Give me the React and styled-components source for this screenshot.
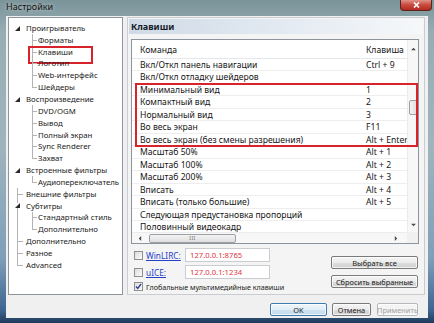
import React from 'react';
import styled, { createGlobalStyle, css } from 'styled-components';

const Global = createGlobalStyle`
  html, body { margin: 0; padding: 0; }
  body { width: 434px; height: 323px; overflow: hidden; font-family: "Noto Sans", "Open Sans", sans-serif; }
  * { box-sizing: border-box; }
`;

const Window = styled.div`
  width: 434px;
  height: 323px;
  display: flex;
  flex-direction: column;
  padding: 0 6px 5px 6px;
  background: linear-gradient(180deg, #7a9499 0%, #97adb3 10%, #9fb4bd 45%, #7f9fb9 80%, #3e6591 96%, #1f3b5a 100%);
`;

const TitleBar = styled.div`
  height: 16px;
  display: flex;
  align-items: flex-start;
  justify-content: space-between;
`;

const Title = styled.span`
  font-size: 9px;
  line-height: 14px;
  color: #151515;
  text-shadow: 0 0 4px rgba(255,255,255,0.6);
`;

const CloseBtn = styled.div`
  width: 32px;
  height: 11px;
  margin-right: -4px;
  border: 1px solid #5a2420;
  border-top: none;
  border-radius: 0 0 4px 4px;
  background: linear-gradient(180deg, #e0928a 0%, #c8493c 50%, #b52a1e 100%);
  display: flex;
  align-items: center;
  justify-content: center;
`;

const Client = styled.div`
  flex: 1;
  display: flex;
  flex-direction: column;
  background: #f0f0f0;
  padding: 1px 3px 0 2px;
`;

const Main = styled.div`
  height: 278px;
  display: flex;
  gap: 4px;
`;

const TreeBox = styled.div`
  width: 115px;
  background: #fff;
  border: 1px solid #8e949b;
  padding-top: 4px;
`;

const TreeRow = styled.div`
  position: relative;
  height: 11.85px;
  display: flex;
  align-items: center;
  padding-left: ${p => (p.$child ? 29 : 17)}px;
  font-size: 7.8px;
  color: #1b1b1b;
  white-space: nowrap;
  ${p => p.$mark && css`
    &::after {
      content: '';
      position: absolute;
      left: 19px;
      top: 0px;
      width: 61px;
      height: 14px;
      border: 2px solid #d8232a;
    }
  `}
`;

const VLine = styled.span`
  position: absolute;
  left: ${p => p.$x}px;
  top: ${p => (p.$part === 'bottom' ? '50%' : '0')};
  height: ${p => (p.$part === 'full' ? '100%' : '50%')};
  width: 1px;
  background: #b4b4b4;
`;

const HLine = styled.span`
  position: absolute;
  left: ${p => p.$x}px;
  top: 50%;
  width: ${p => p.$w}px;
  height: 1px;
  background: #b4b4b4;
`;

const Expander = styled.svg`
  position: absolute;
  left: 6px;
  top: 3.5px;
  width: 5px;
  height: 5px;
  background: #fff;
`;

const Panel = styled.div`
  flex: 1;
  display: flex;
  flex-direction: column;
  border: 1px solid #c9cdd2;
  background: #f4f4f4;
`;

const PanelHeader = styled.div`
  margin: 1px 1px 0 1px;
  height: 15px;
  padding-left: 2px;
  display: flex;
  align-items: center;
  font-size: 9px;
  font-weight: bold;
  color: #151c28;
  background: linear-gradient(90deg, #cfdae6 0%, #e2e9f1 50%, #f6f8fa 100%);
`;

const ListBox = styled.div`
  position: relative;
  margin: 5px 5px 0 3px;
  height: 205px;
  border: 1px solid #8e949b;
  background: #fff;
  display: grid;
  grid-template-columns: 1fr 11px;
  grid-template-rows: 1fr 11px;
`;

const ListContent = styled.div`
  overflow: hidden;
  display: flex;
  flex-direction: column;
`;

const ListRow = styled.div`
  height: ${p => (p.$head ? 18.75 : 12.5)}px;
  flex: none;
  display: flex;
  align-items: ${p => (p.$head ? 'flex-end' : 'center')};
  padding-bottom: ${p => (p.$head ? 2 : 0)}px;
  border-bottom: 1px solid ${p => (p.$head ? '#e3e6ea' : '#eeeeee')};
  font-size: 8.6px;
  color: #161616;
  white-space: nowrap;
`;

const CmdCell = styled.div`
  width: 232px;
  flex: none;
  padding-left: 8px;
  overflow: hidden;
`;

const KeyCell = styled.div`
  flex: none;
  padding-left: 2px;
`;

const VScroll = styled.div`
  display: flex;
  flex-direction: column;
  align-items: center;
  background: #f7f7f7;
  border-left: 1px solid #ececec;
`;

const HScroll = styled.div`
  display: flex;
  align-items: center;
  background: #f7f7f7;
  border-top: 1px solid #ececec;
  padding: 0 6px 0 2px;
`;

const Corner = styled.div`
  background: #f0f0f0;
`;

const ArrowBox = styled.div`
  width: 11px;
  height: ${p => p.$h || 11}px;
  display: flex;
  align-items: center;
  justify-content: center;
  flex: none;
`;

const VThumb = styled.div`
  width: 9px;
  height: 15px;
  margin-top: 42px;
  border: 1px solid #9aa0a6;
  border-radius: 2px;
  background: linear-gradient(90deg, #f3f3f3, #dedede);
`;

const HThumb = styled.div`
  width: 87px;
  height: 9px;
  margin-left: 4px;
  border: 1px solid #9aa0a6;
  border-radius: 2px;
  background: linear-gradient(180deg, #f3f3f3, #dedede);
  display: flex;
  align-items: center;
  justify-content: center;
  font-size: 5px;
  color: #666;
  letter-spacing: 0.5px;
`;

const Spacer = styled.div`
  flex: 1;
`;

const ListMark = styled.div`
  position: absolute;
  left: 3px;
  top: 43px;
  width: 283px;
  height: 64px;
  border: 2px solid #d8232a;
  pointer-events: none;
`;

const Bottom = styled.div`
  display: flex;
  justify-content: space-between;
  padding: 3px 6px 0 6px;
`;

const OptCol = styled.div`
  display: flex;
  flex-direction: column;
  gap: 1px;
`;

const OptRow = styled.div`
  height: ${p => (p.$short ? 11 : 16)}px;
  display: flex;
  align-items: center;
  font-size: ${p => (p.$short ? 7.2 : 8.3)}px;
  color: #1b1b1b;
  white-space: nowrap;
`;

const Check = styled.div`
  width: 9px;
  height: 9px;
  flex: none;
  margin-right: 3px;
  border: 1px solid #8f8f8f;
  background: linear-gradient(135deg, #dcdcdc, #fbfbfb);
  display: flex;
  align-items: center;
  justify-content: center;
`;

const LinkLabel = styled.span`
  width: 39px;
  flex: none;
  color: #2440c8;
  text-decoration: underline;
`;

const AddrInput = styled.div`
  width: 85px;
  height: 14px;
  border: 1px solid #c9ccd1;
  background: #fff;
  padding-left: 4px;
  display: flex;
  align-items: center;
  color: #e2333b;
  font-size: 7.7px;
`;

const BtnCol = styled.div`
  display: flex;
  flex-direction: column;
  gap: 6px;
  padding-top: 9px;
`;

const Button = styled.div`
  width: ${p => p.$w}px;
  height: 13px;
  display: flex;
  align-items: center;
  justify-content: center;
  font-size: 7.4px;
  border-radius: 2px;
  border: 1px solid ${p => (p.$disabled ? '#b5b9bd' : p.$focus ? '#3d7bad' : '#7a7a7a')};
  color: ${p => (p.$disabled ? '#a2a2a2' : '#1b1b1b')};
  background: ${p => (p.$disabled
    ? '#f4f4f4'
    : p.$focus
      ? 'linear-gradient(180deg, #eef6fb 0%, #e2eef7 50%, #cfe3f1 51%, #c6dced 100%)'
      : 'linear-gradient(180deg, #f4f4f4 0%, #ebebeb 50%, #dddddd 51%, #d2d2d2 100%)')};
  box-shadow: inset 0 0 0 1px rgba(255,255,255,0.7);
  white-space: nowrap;
`;

const ButtonBar = styled.div`
  display: flex;
  justify-content: flex-end;
  gap: 5px;
  margin-top: 8px;
  padding-right: 7px;
`;

const tree = [
  { t: 'Проигрыватель', exp: true },
  { t: 'Форматы', c: 'full' },
  { t: 'Клавиши', c: 'full', mark: true },
  { t: 'Логотип', c: 'full' },
  { t: 'Web-интерфейс', c: 'full' },
  { t: 'Шейдеры', c: 'top' },
  { t: 'Воспроизведение', exp: true },
  { t: 'DVD/OGM', c: 'full' },
  { t: 'Вывод', c: 'full' },
  { t: 'Полный экран', c: 'full' },
  { t: 'Sync Renderer', c: 'full' },
  { t: 'Захват', c: 'top' },
  { t: 'Встроенные фильтры', exp: true },
  { t: 'Аудиопереключатель', c: 'top' },
  { t: 'Внешние фильтры', r: 'full', h: true },
  { t: 'Субтитры', exp: true, r: 'full' },
  { t: 'Стандартный стиль', c: 'full', r: 'full' },
  { t: 'Дополнительно', c: 'top', r: 'full' },
  { t: 'Дополнительно', r: 'full', h: true },
  { t: 'Разное', r: 'full', h: true },
  { t: 'Advanced', r: 'top', h: true },
];

const rows = [
  ['Вкл/Откл панель навигации', 'Ctrl + 9'],
  ['Вкл/Откл отладку шейдеров', ''],
  ['Минимальный вид', '1'],
  ['Компактный вид', '2'],
  ['Нормальный вид', '3'],
  ['Во весь экран', 'F11'],
  ['Во весь экран (без смены разрешения)', 'Alt + Enter'],
  ['Масштаб 50%', 'Alt + 1'],
  ['Масштаб 100%', 'Alt + 2'],
  ['Масштаб 200%', 'Alt + 3'],
  ['Вписать', 'Alt + 4'],
  ['Вписать (только большие)', 'Alt + 5'],
  ['Следующая предустановка пропорций', ''],
  ['Половинный видеокадр', ''],
];

const Tri = ({ dir }) => {
  const pts = {
    up: '0,4 3,1 6,4',
    down: '0,1 3,4 6,1',
    left: '4,0 1,3 4,6',
    right: '1,0 4,3 1,6',
  }[dir];
  const vert = dir === 'up' || dir === 'down';
  return (
    <svg width={vert ? 5 : 4} height={vert ? 4 : 5} viewBox={vert ? '0 0 6 5' : '0 0 5 6'}>
      <polygon points={pts} fill="#4a4a4a" />
    </svg>
  );
};

const CheckMark = () => (
  <svg width="7" height="7" viewBox="0 0 7 7">
    <path d="M1 3.5 L2.8 5.5 L6 1" stroke="#2b3f8c" strokeWidth="1.3" fill="none" />
  </svg>
);

export default function App() {
  return (
    <>
      <Global />
      <Window>
        <TitleBar>
          <Title>Настройки</Title>
          <CloseBtn>
            <svg width="7" height="6" viewBox="0 0 7 6">
              <path d="M1 0.5 L6 5.5 M6 0.5 L1 5.5" stroke="#fff" strokeWidth="1.6" />
            </svg>
          </CloseBtn>
        </TitleBar>
        <Client>
          <Main>
            <TreeBox>
              {tree.map((it, i) => (
                <TreeRow key={i} $child={!!it.c} $mark={it.mark}>
                  {it.r && <VLine $x={8} $part={it.r} />}
                  {it.h && <HLine $x={8} $w={6} />}
                  {it.c && <VLine $x={23} $part={it.c} />}
                  {it.c && <HLine $x={23} $w={5} />}
                  {it.exp && (
                    <Expander viewBox="0 0 5 5">
                      <polygon points="5,0 5,5 0,5" fill="#2a2a2a" />
                    </Expander>
                  )}
                  {it.t}
                </TreeRow>
              ))}
            </TreeBox>
            <Panel>
              <PanelHeader>Клавиши</PanelHeader>
              <ListBox>
                <ListContent>
                  <ListRow $head>
                    <CmdCell>Команда</CmdCell>
                    <KeyCell>Клавиша</KeyCell>
                  </ListRow>
                  {rows.map((r, i) => (
                    <ListRow key={i}>
                      <CmdCell>{r[0]}</CmdCell>
                      <KeyCell>{r[1]}</KeyCell>
                    </ListRow>
                  ))}
                </ListContent>
                <VScroll>
                  <ArrowBox $h={18}><Tri dir="up" /></ArrowBox>
                  <VThumb />
                  <Spacer />
                  <ArrowBox $h={14}><Tri dir="down" /></ArrowBox>
                </VScroll>
                <HScroll>
                  <ArrowBox><Tri dir="left" /></ArrowBox>
                  <HThumb>III</HThumb>
                  <Spacer />
                  <ArrowBox><Tri dir="right" /></ArrowBox>
                </HScroll>
                <Corner />
                <ListMark />
              </ListBox>
              <Bottom>
                <OptCol>
                  <OptRow>
                    <Check />
                    <LinkLabel>WinLIRC:</LinkLabel>
                    <AddrInput>127.0.0.1:8765</AddrInput>
                  </OptRow>
                  <OptRow>
                    <Check />
                    <LinkLabel>uICE:</LinkLabel>
                    <AddrInput>127.0.0.1:1234</AddrInput>
                  </OptRow>
                  <OptRow $short>
                    <Check><CheckMark /></Check>
                    Глобальные мультимедийные клавиши
                  </OptRow>
                </OptCol>
                <BtnCol>
                  <Button $w={87}>Выбрать все</Button>
                  <Button $w={87}>Сбросить выбранные</Button>
                </BtnCol>
              </Bottom>
            </Panel>
          </Main>
          <ButtonBar>
            <Button $w={57} $focus>OK</Button>
            <Button $w={39}>Отмена</Button>
            <Button $w={41} $disabled style={{ marginLeft: 1 }}>Применить</Button>
          </ButtonBar>
        </Client>
      </Window>
    </>
  );
}
